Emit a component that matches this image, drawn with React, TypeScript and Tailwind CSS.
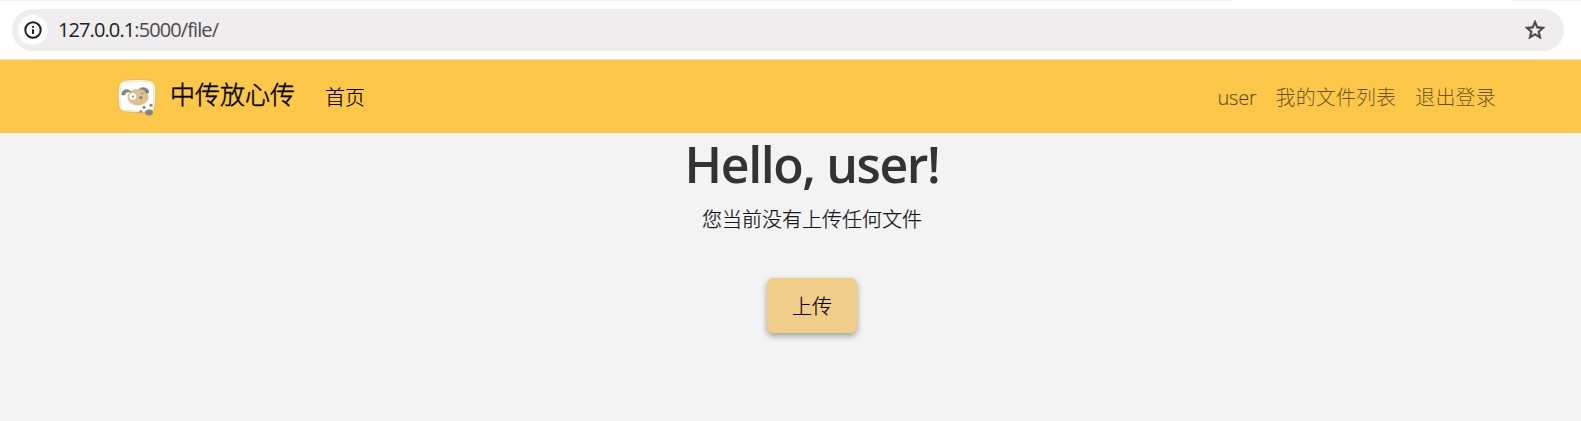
const cjk = "font-['Open_Sans','Noto_Sans_CJK_SC',sans-serif]";

function InfoIcon() {
  return (
    <svg width="18" height="18" viewBox="0 0 18 18" fill="none">
      <circle cx="9" cy="9" r="7.7" stroke="#202124" strokeWidth="2" />
      <path d="M9 8.3V13" stroke="#202124" strokeWidth="2" />
      <path d="M9 4.9V6.8" stroke="#202124" strokeWidth="2" />
    </svg>
  );
}

function StarIcon() {
  return (
    <svg width="24" height="24" viewBox="0 0 24 24" fill="#474747" stroke="#474747" strokeWidth="0.6">
      <path d="M22 9.24l-7.19-.62L12 2 9.19 8.63 2 9.24l5.46 4.73L5.82 21 12 17.27 18.18 21l-1.63-7.03L22 9.24zM12 15.4l-3.76 2.27 1-4.28-3.32-2.88 4.38-.38L12 6.1l1.71 4.04 4.38.38-3.32 2.88 1 4.28L12 15.4z" />
    </svg>
  );
}

function DogLogo() {
  return (
    <svg className="mt-0.5" width="40" height="38" viewBox="0 0 40 38">
      <path d="M9 1.100C15 .3 27 .3 32 1.300c4.500 1 6.500 3.500 6.700 8 .4 7 .2 12-1 18.500-.5 3.500-3 5.300-6 5.500-8 .4-16 .3-23-.5-4.500-.4-6.500-2.500-7-6.500C.8 20 .8 14 1.700 8 2.300 4 4.500 1.700 9 1.100z" fill="#fff6df" stroke="#d9b45f" strokeWidth="0.9" />
      <path d="M9 3C15 2.200 26 2.200 31 3c4 .8 5.500 3 5.500 7 .3 7 0 11-1 17-.5 3-2.500 4.500-5.500 4.800-8 .4-14 .2-21-.5-3.500-.4-5-2-5.300-5C3 20 3 14 3.700 9 4.200 5.500 5.500 3.500 9 3z" fill="#ffffff" stroke="#d8d3c6" strokeWidth="0.5" />
      <ellipse cx="21" cy="18.200" rx="10.600" ry="8.300" fill="#dcc38b" />
      <path d="M4.500 16C4 12.500 7 10 10 10.200c2.500.2 4 1.800 4.300 3.600-2.300-.8-4-.6-5.300.2-.4 2-2.300 3-4.500 2z" fill="#858585" />
      <path d="M21.500 10.500c2-2.500 5.500-2.800 8-1.200 2.200 1.400 2.800 3 2.500 4.700-2.300 1-4 .2-4.400-2-1.600-1.200-3.900-1.300-6.100-1.500z" fill="#858585" />
      <circle cx="15.700" cy="17.500" r="3.500" fill="#fffefa" />
      <circle cx="16" cy="17.500" r="1" fill="#858585" />
      <circle cx="25.300" cy="14.500" r="0.900" fill="#858585" />
      <circle cx="23.800" cy="18.600" r="1.700" fill="#858585" />
      <circle cx="27" cy="28.300" r="1.500" fill="#858585" />
      <circle cx="34" cy="26.300" r="1.500" fill="#858585" />
      <circle cx="23.800" cy="32.500" r="1.300" fill="#858585" />
      <ellipse cx="32" cy="33.500" rx="4" ry="3" transform="rotate(-12 32 33.500)" fill="#858585" />
    </svg>
  );
}

export default function App() {
  return (
    <div className={`flex h-[421px] flex-col overflow-hidden bg-[#f3f3f3] ${cjk}`}>
      <header className="flex h-[60px] shrink-0 flex-col border-b border-[#dddddd] bg-white">
        <div className="flex h-px justify-between">
          <div className="w-[1230px] bg-[#f3f3f3]" />
          <div className="w-[68px] bg-[#f3f3f3]" />
        </div>
        <div className="mt-2 mr-[17px] ml-3 flex h-[42px] items-center rounded-full bg-[#efedee] pr-[17px] pl-1.5">
          <div className="flex size-[30px] items-center justify-center rounded-full bg-white">
            <InfoIcon />
          </div>
          <div className="ml-2.5 flex-1 text-[20px] leading-none tracking-[-0.9px] whitespace-nowrap text-[#4b4b4d]">
            <span className="text-[#202124]">127.0.0.1</span>:5000/file/
          </div>
          <StarIcon />
        </div>
      </header>
      <nav className="flex h-[73px] shrink-0 items-center bg-[#fdc74a] pr-[85px] pl-[117px] font-light whitespace-nowrap text-black">
        <DogLogo />
        <a className="ml-[13px] -mt-[5px] text-[25px] leading-none font-light [-webkit-text-stroke:0.5px_currentColor]">中传放心传</a>
        <a className="mt-0.5 ml-[30px] text-[20px] leading-none [-webkit-text-stroke:0.2px_currentColor]">首页</a>
        <div className="mt-0.5 ml-auto flex items-center gap-[19px] text-[20px] leading-none text-black/60">
          <a className="tracking-[-0.2px] [-webkit-text-stroke:0.2px_currentColor]">user</a>
          <a className="tracking-[0.1px]">我的文件列表</a>
          <a className="tracking-[0.2px]">退出登录</a>
        </div>
      </nav>
      <main className="flex flex-col items-center pl-[43px]">
        <h1 className="mt-px text-[50px] leading-[60px] font-semibold tracking-[-1.4px] whitespace-nowrap text-[#333333]">Hello, user!</h1>
        <p className="mt-[11px] text-[20px] leading-[30px] font-light text-[#14181c] [-webkit-text-stroke:0.25px_currentColor]">您当前没有上传任何文件</p>
        <button className="mt-[43px] h-[55px] w-[90px] rounded-[6px] bg-[#f0cd89] pt-0.5 text-[20px] font-light text-black shadow-[0_3px_6px_rgba(0,0,0,0.35)] [-webkit-text-stroke:0.2px_currentColor]">上传</button>
      </main>
    </div>
  );
}
